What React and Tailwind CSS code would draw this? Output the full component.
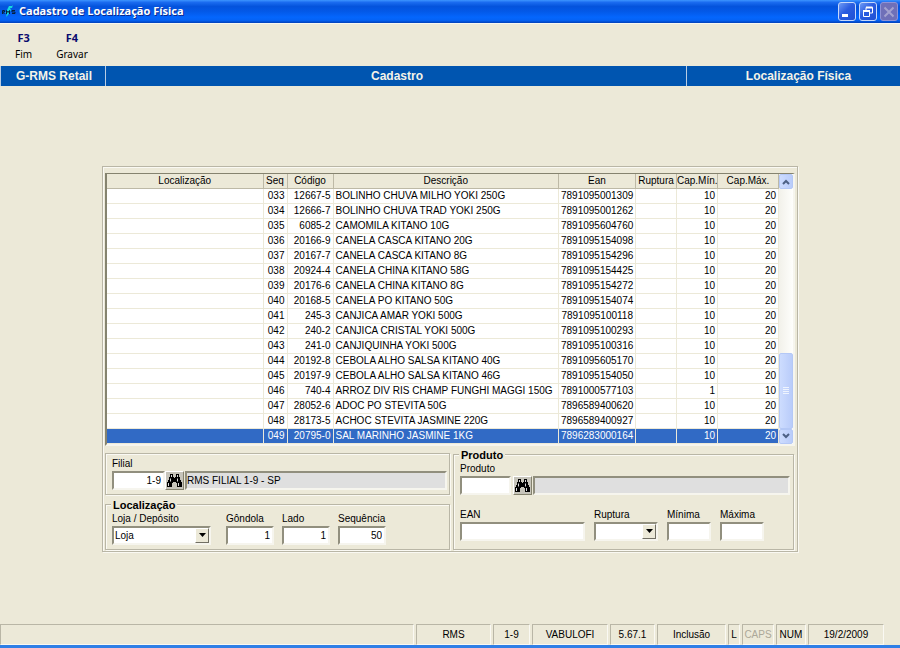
import React, { useState } from 'react';

// seq, codigo, descricao, ean, cap. minima, cap. maxima
const PRODUTOS = [
  ['033', '12667-5', 'BOLINHO CHUVA MILHO YOKI 250G', '7891095001309', 10, 20],
  ['034', '12666-7', 'BOLINHO CHUVA TRAD YOKI 250G', '7891095001262', 10, 20],
  ['035', '6085-2', 'CAMOMILA KITANO 10G', '7891095604760', 10, 20],
  ['036', '20166-9', 'CANELA CASCA KITANO 20G', '7891095154098', 10, 20],
  ['037', '20167-7', 'CANELA CASCA KITANO 8G', '7891095154296', 10, 20],
  ['038', '20924-4', 'CANELA CHINA KITANO 58G', '7891095154425', 10, 20],
  ['039', '20176-6', 'CANELA CHINA KITANO 8G', '7891095154272', 10, 20],
  ['040', '20168-5', 'CANELA PO KITANO 50G', '7891095154074', 10, 20],
  ['041', '245-3', 'CANJICA AMAR YOKI 500G', '7891095100118', 10, 20],
  ['042', '240-2', 'CANJICA CRISTAL YOKI 500G', '7891095100293', 10, 20],
  ['043', '241-0', 'CANJIQUINHA YOKI 500G', '7891095100316', 10, 20],
  ['044', '20192-8', 'CEBOLA ALHO SALSA KITANO 40G', '7891095605170', 10, 20],
  ['045', '20197-9', 'CEBOLA ALHO SALSA KITANO 46G', '7891095154050', 10, 20],
  ['046', '740-4', 'ARROZ DIV RIS CHAMP FUNGHI MAGGI 150G', '7891000577103', 1, 10],
  ['047', '28052-6', 'ADOC PO STEVITA 50G', '7896589400620', 10, 20],
  ['048', '28173-5', 'ACHOC STEVITA JASMINE 220G', '7896589400927', 10, 20],
  ['049', '20795-0', 'SAL MARINHO JASMINE 1KG', '7896283000164', 10, 20],
];

const COLUNAS = [
  ['Localização', 'w-[156px]'],
  ['Seq', 'w-[24px]'],
  ['Código', 'w-[46px]'],
  ['Descrição', ''],
  ['Ean', 'w-[77px]'],
  ['Ruptura', 'w-[41px]'],
  ['Cap.Mín.', 'w-[41px]'],
  ['Cap.Máx.', 'w-[61px]'],
];

const STATUS = [
  ['RMS', 'w-[75px]'],
  ['1-9', 'w-[37px]'],
  ['VABULOFI', 'w-[76px]'],
  ['5.67.1', 'w-[45px]'],
  ['Inclusão', 'w-[69px]'],
  ['L', 'w-[12px]'],
  ['CAPS', 'w-[32px] text-[#aca899]'],
  ['NUM', 'w-[30px]'],
  ['19/2/2009', 'w-[76px]'],
];

const SUNKEN =
  'h-[19px] border-2 border-t-[#918f7e] border-l-[#918f7e] border-r-[#f6f5ee] border-b-[#f6f5ee]';
const ETCHED =
  'border border-[#b9b6a6] shadow-[inset_1px_1px_0_#faf9f3,1px_1px_0_#faf9f3]';

function Field({ id, label, width, children, defaultValue }) {
  return (
    <div className={`flex flex-col ${width}`}>
      <label htmlFor={id} className="h-[14px] leading-[14px] whitespace-nowrap">{label}</label>
      {children || (
        <input
          id={id}
          defaultValue={defaultValue}
          className={`${SUNKEN} w-full bg-white px-[2px] text-right outline-none`}
        />
      )}
    </div>
  );
}

function Combo({ id, options }) {
  return (
    <div className="relative">
      <select id={id} className={`${SUNKEN} block w-full appearance-none bg-white pl-[1px] outline-none`}>
        {options.map((o) => <option key={o}>{o}</option>)}
      </select>
      <span className="pointer-events-none absolute top-[2px] right-[2px] flex h-[15px] w-[14px] items-center justify-center border border-t-white border-l-white border-r-[#716f64] border-b-[#716f64] bg-[#ece9d8]">
        <svg width="7" height="4" viewBox="0 0 7 4"><path d="M0 0h7L3.5 4z" fill="#000" /></svg>
      </span>
    </div>
  );
}

function SearchButton({ label }) {
  return (
    <button
      type="button"
      aria-label={label}
      className="flex h-[19px] w-[19px] shrink-0 items-center justify-center border border-t-white border-l-white border-r-[#85836f] border-b-[#85836f] bg-[#c6c4ba]"
    >
      <svg width="15" height="13" viewBox="0 0 15 13">
        <path d="M3 0h3v3h1v1h1V3h1V0h3v3h1v3h1v2h1v5h-5V9H9V8H6v1H5v4H0V8h1V6h1V3h1z" fill="#000" />
        <path d="M4.500 1v2M10.500 1v2M3.500 4.500v3M10.500 4.500v3M1.500 9v3M11.500 9v3" stroke="#d8d8d8" strokeWidth="1" />
      </svg>
    </button>
  );
}

function TitleBar() {
  const btn = 'flex h-[19px] w-[18px] items-center justify-center rounded-[3px] border';
  return (
    <header className="flex h-[23px] items-center bg-[linear-gradient(180deg,#3d95ff_0%,#1b6cf0_10%,#0453dc_28%,#0359e8_50%,#0466fd_75%,#0462f5_88%,#0240b8_100%)] pr-[2px] pl-[2px]">
      <svg width="14" height="14" viewBox="0 0 14 14" className="shrink-0">
        <path d="M5 5L7 1h3l1-1-1 3H8l1 2-3 5-2 2 1-4H3z" fill="#16d8dc" />
        <path d="M.5 9V5.500h2V7h-2l2 2M4.500 9V5.500L6 7.500l1.500-2V9M13 5.500h-3V7h3v1.500h-3" fill="none" stroke="#06203c" />
      </svg>
      <h1 className="ml-[3px] flex-1 font-['Noto_Sans','Open_Sans',sans-serif] text-[11px] font-bold text-white [text-shadow:1px_1px_0_#0a2a90]">
        Cadastro de Localização Física
      </h1>
      <div className="flex gap-[3px]">
        <button type="button" aria-label="Minimizar" className={`${btn} border-[#c5d8fb] bg-[linear-gradient(135deg,#6f9bf5,#2a5ce0_45%,#1e50d4)]`}>
          <svg width="12" height="12" viewBox="0 0 12 12"><path d="M1 8h6v3H1z" fill="#fff" /></svg>
        </button>
        <button type="button" aria-label="Restaurar" className={`${btn} border-[#c5d8fb] bg-[linear-gradient(135deg,#6f9bf5,#2a5ce0_45%,#1e50d4)]`}>
          <svg width="12" height="12" viewBox="0 0 12 12" fill="none" stroke="#fff">
            <path d="M4 4V1.500h6.500V7H8" />
            <path d="M4 1.500h6.500" strokeWidth="2" />
            <path d="M1.500 5h6v5.500h-6z" />
            <path d="M1 5h7" strokeWidth="2" />
          </svg>
        </button>
        <button type="button" aria-label="Fechar" disabled className={`${btn} border-[#8f93d6] bg-[#6f70b8]`}>
          <svg width="12" height="12" viewBox="0 0 12 12"><path d="M1.500 1.500l9 9M10.500 1.500l-9 9" stroke="#a3a2cf" strokeWidth="2" /></svg>
        </button>
      </div>
    </header>
  );
}

function ScrollBar() {
  const part = 'flex shrink-0 items-center justify-center rounded-[2px] border border-[#b4c8f6] bg-[linear-gradient(90deg,#cddcfe,#b9ccfa)]';
  return (
    <div className="flex w-[14px] shrink-0 flex-col bg-[linear-gradient(90deg,#f2f1ea,#fefefc)]">
      <button type="button" aria-label="Rolar para cima" className={`${part} h-[15px]`}>
        <svg width="8" height="6" viewBox="0 0 8 6"><path d="M1 5l3-3 3 3" fill="none" stroke="#4d6185" strokeWidth="2" /></svg>
      </button>
      <div className="flex-1" />
      <div className={`${part} h-[76px]`}>
        <svg width="6" height="8" viewBox="0 0 6 8"><path d="M0 .5h6M0 2.500h6M0 4.500h6M0 6.500h6" stroke="#eef4fe" /></svg>
      </div>
      <button type="button" aria-label="Rolar para baixo" className={`${part} h-[15px]`}>
        <svg width="8" height="6" viewBox="0 0 8 6"><path d="M1 1l3 3 3-3" fill="none" stroke="#4d6185" strokeWidth="2" /></svg>
      </button>
    </div>
  );
}

function Grade({ selected, onSelect }) {
  return (
    <div className="flex border-t border-r-2 border-b-2 border-l-2 border-t-[#85836f] border-r-[#f6f5ee] border-b-[#f6f5ee] border-l-[#85836f] bg-white">
      <table className="w-full table-fixed border-collapse">
        <thead>
          <tr className="h-[14px] bg-[#ece9d8]">
            {COLUNAS.map(([nome, largura]) => (
              <th
                key={nome}
                className={`${largura} overflow-hidden border-r border-b border-[#bdb9a6] p-0 text-center leading-[13px] font-normal whitespace-nowrap`}
              >
                {nome}
              </th>
            ))}
          </tr>
        </thead>
        <tbody>
          {PRODUTOS.map(([seq, codigo, descricao, ean, min, max]) => {
            const cell = 'border-r border-b border-[#ece9d8] px-[2px] py-0 leading-[14px] whitespace-nowrap';
            return (
              <tr
                key={seq}
                onClick={() => onSelect(seq)}
                className={seq === selected ? 'h-[15px] bg-[#316ac5] text-white' : 'h-[15px]'}
              >
                <td className={cell} />
                <td className={`${cell} text-right`}>{seq}</td>
                <td className={`${cell} text-right`}>{codigo}</td>
                <td className={cell}>{descricao}</td>
                <td className={`${cell} text-right`}>{ean}</td>
                <td className={cell} />
                <td className={`${cell} text-right`}>{min}</td>
                <td className={`${cell} text-right`}>{max}</td>
              </tr>
            );
          })}
        </tbody>
      </table>
      <ScrollBar />
    </div>
  );
}

export default function App() {
  const [selected, setSelected] = useState('049');
  const legend = 'ml-[5px] bg-[#ece9d8] px-[2px] text-[11px] leading-[14px] font-bold';

  return (
    <div className="flex min-h-screen flex-col bg-[#ece9d8] font-['Liberation_Sans',Arial,sans-serif] text-[10px] text-black">
      <TitleBar />

      <nav className="flex h-[43px] gap-[24px] border-t border-[#f8f7f0] pt-[5px] pl-[15px] font-['Noto_Sans','Open_Sans',sans-serif]">
        <button type="button" className="flex flex-col items-center leading-[17px]">
          <span className="text-[11px] font-bold text-[#0a0a6e]">F3</span>
          <span>Fim</span>
        </button>
        <button type="button" className="flex flex-col items-center leading-[17px]">
          <span className="text-[11px] font-bold text-[#0a0a6e]">F4</span>
          <span>Gravar</span>
        </button>
      </nav>

      <div className="flex h-[20px] bg-[#0055b0] text-center text-[12px] leading-[21px] font-bold text-[#f4f3e8]">
        <div className="w-[106px] border-r border-l border-[#b8cde4] pl-[2px]">G-RMS Retail</div>
        <div className="flex-1 pl-[2px]">Cadastro</div>
        <div className="w-[214px] border-l border-[#b8cde4] pl-[10px]">Localização Física</div>
      </div>

      <main className="flex-1 pt-20">
        <div className={`mx-auto w-full max-w-[696px] px-[2px] pt-[6px] pb-[1px] ${ETCHED}`}>
          <Grade selected={selected} onSelect={setSelected} />

          <form className="flex gap-[3px] pt-[2px] pr-[1px]" onSubmit={(e) => e.preventDefault()}>
            <div className="w-[345px] shrink-0">
              <div className={`mt-[5px] h-[42px] pt-[3px] pr-[2px] pl-[6px] ${ETCHED}`}>
                <label htmlFor="filial" className="block leading-[14px]">Filial</label>
                <div className="flex">
                  <input id="filial" defaultValue="1-9" className={`${SUNKEN} w-[53px] bg-white px-[2px] text-right outline-none`} />
                  <SearchButton label="Procurar filial" />
                  <input
                    aria-label="Nome da filial"
                    readOnly
                    value="RMS FILIAL 1-9 - SP"
                    className={`${SUNKEN} ml-[1px] min-w-0 flex-1 bg-[#dfdfdf] outline-none`}
                  />
                </div>
              </div>

              <fieldset className={`mt-[3px] h-[52px] min-w-0 ${ETCHED}`}>
                <legend className={legend}>Localização</legend>
                <div className="flex px-[6px]">
                  <Field id="deposito" label="Loja / Depósito" width="w-[99px]">
                    <Combo id="deposito" options={['Loja', 'Depósito']} />
                  </Field>
                  <div className="ml-[15px] flex gap-[8px]">
                    <Field id="gondola" label="Gôndola" width="w-[48px]" defaultValue="1" />
                    <Field id="lado" label="Lado" width="w-[48px]" defaultValue="1" />
                    <Field id="sequencia" label="Sequência" width="w-[48px]" defaultValue="50" />
                  </div>
                </div>
              </fieldset>
            </div>

            <fieldset className={`h-[102px] min-w-0 flex-1 ${ETCHED}`}>
              <legend className={legend}>Produto</legend>
              <div className="pr-[3px] pl-[6px]">
                <label htmlFor="produto" className="block leading-[14px]">Produto</label>
                <div className="flex">
                  <input id="produto" className={`${SUNKEN} w-[51px] bg-white px-[2px] text-right outline-none`} />
                  <div className="ml-[2px] flex min-w-0 flex-1">
                    <SearchButton label="Procurar produto" />
                    <input aria-label="Descrição do produto" readOnly value="" className={`${SUNKEN} ml-[1px] min-w-0 flex-1 bg-[#dfdfdf] outline-none`} />
                  </div>
                </div>
                <div className="mt-[13px] flex gap-[9px]">
                  <Field id="ean" label="EAN" width="w-[125px]" />
                  <Field id="ruptura" label="Ruptura" width="w-[64px]">
                    <Combo id="ruptura" options={['', 'Sim', 'Não']} />
                  </Field>
                  <Field id="minima" label="Mínima" width="w-[44px]" />
                  <Field id="maxima" label="Máxima" width="w-[44px]" />
                </div>
              </div>
            </fieldset>
          </form>
        </div>
      </main>

      <footer className="flex h-[24px] gap-[2px] border-b-[3px] border-[#2f7fe6] pr-[16px] text-center leading-[19px]">
        <div className="flex-1 border border-t-[#b9b6a6] border-r-[#faf9f3] border-b-[#faf9f3] border-l-[#b9b6a6]" />
        {STATUS.map(([texto, largura]) => (
          <div
            key={texto}
            className={`${largura} shrink-0 border border-t-[#b9b6a6] border-r-[#faf9f3] border-b-[#faf9f3] border-l-[#b9b6a6]`}
          >
            {texto}
          </div>
        ))}
      </footer>
    </div>
  );
}
